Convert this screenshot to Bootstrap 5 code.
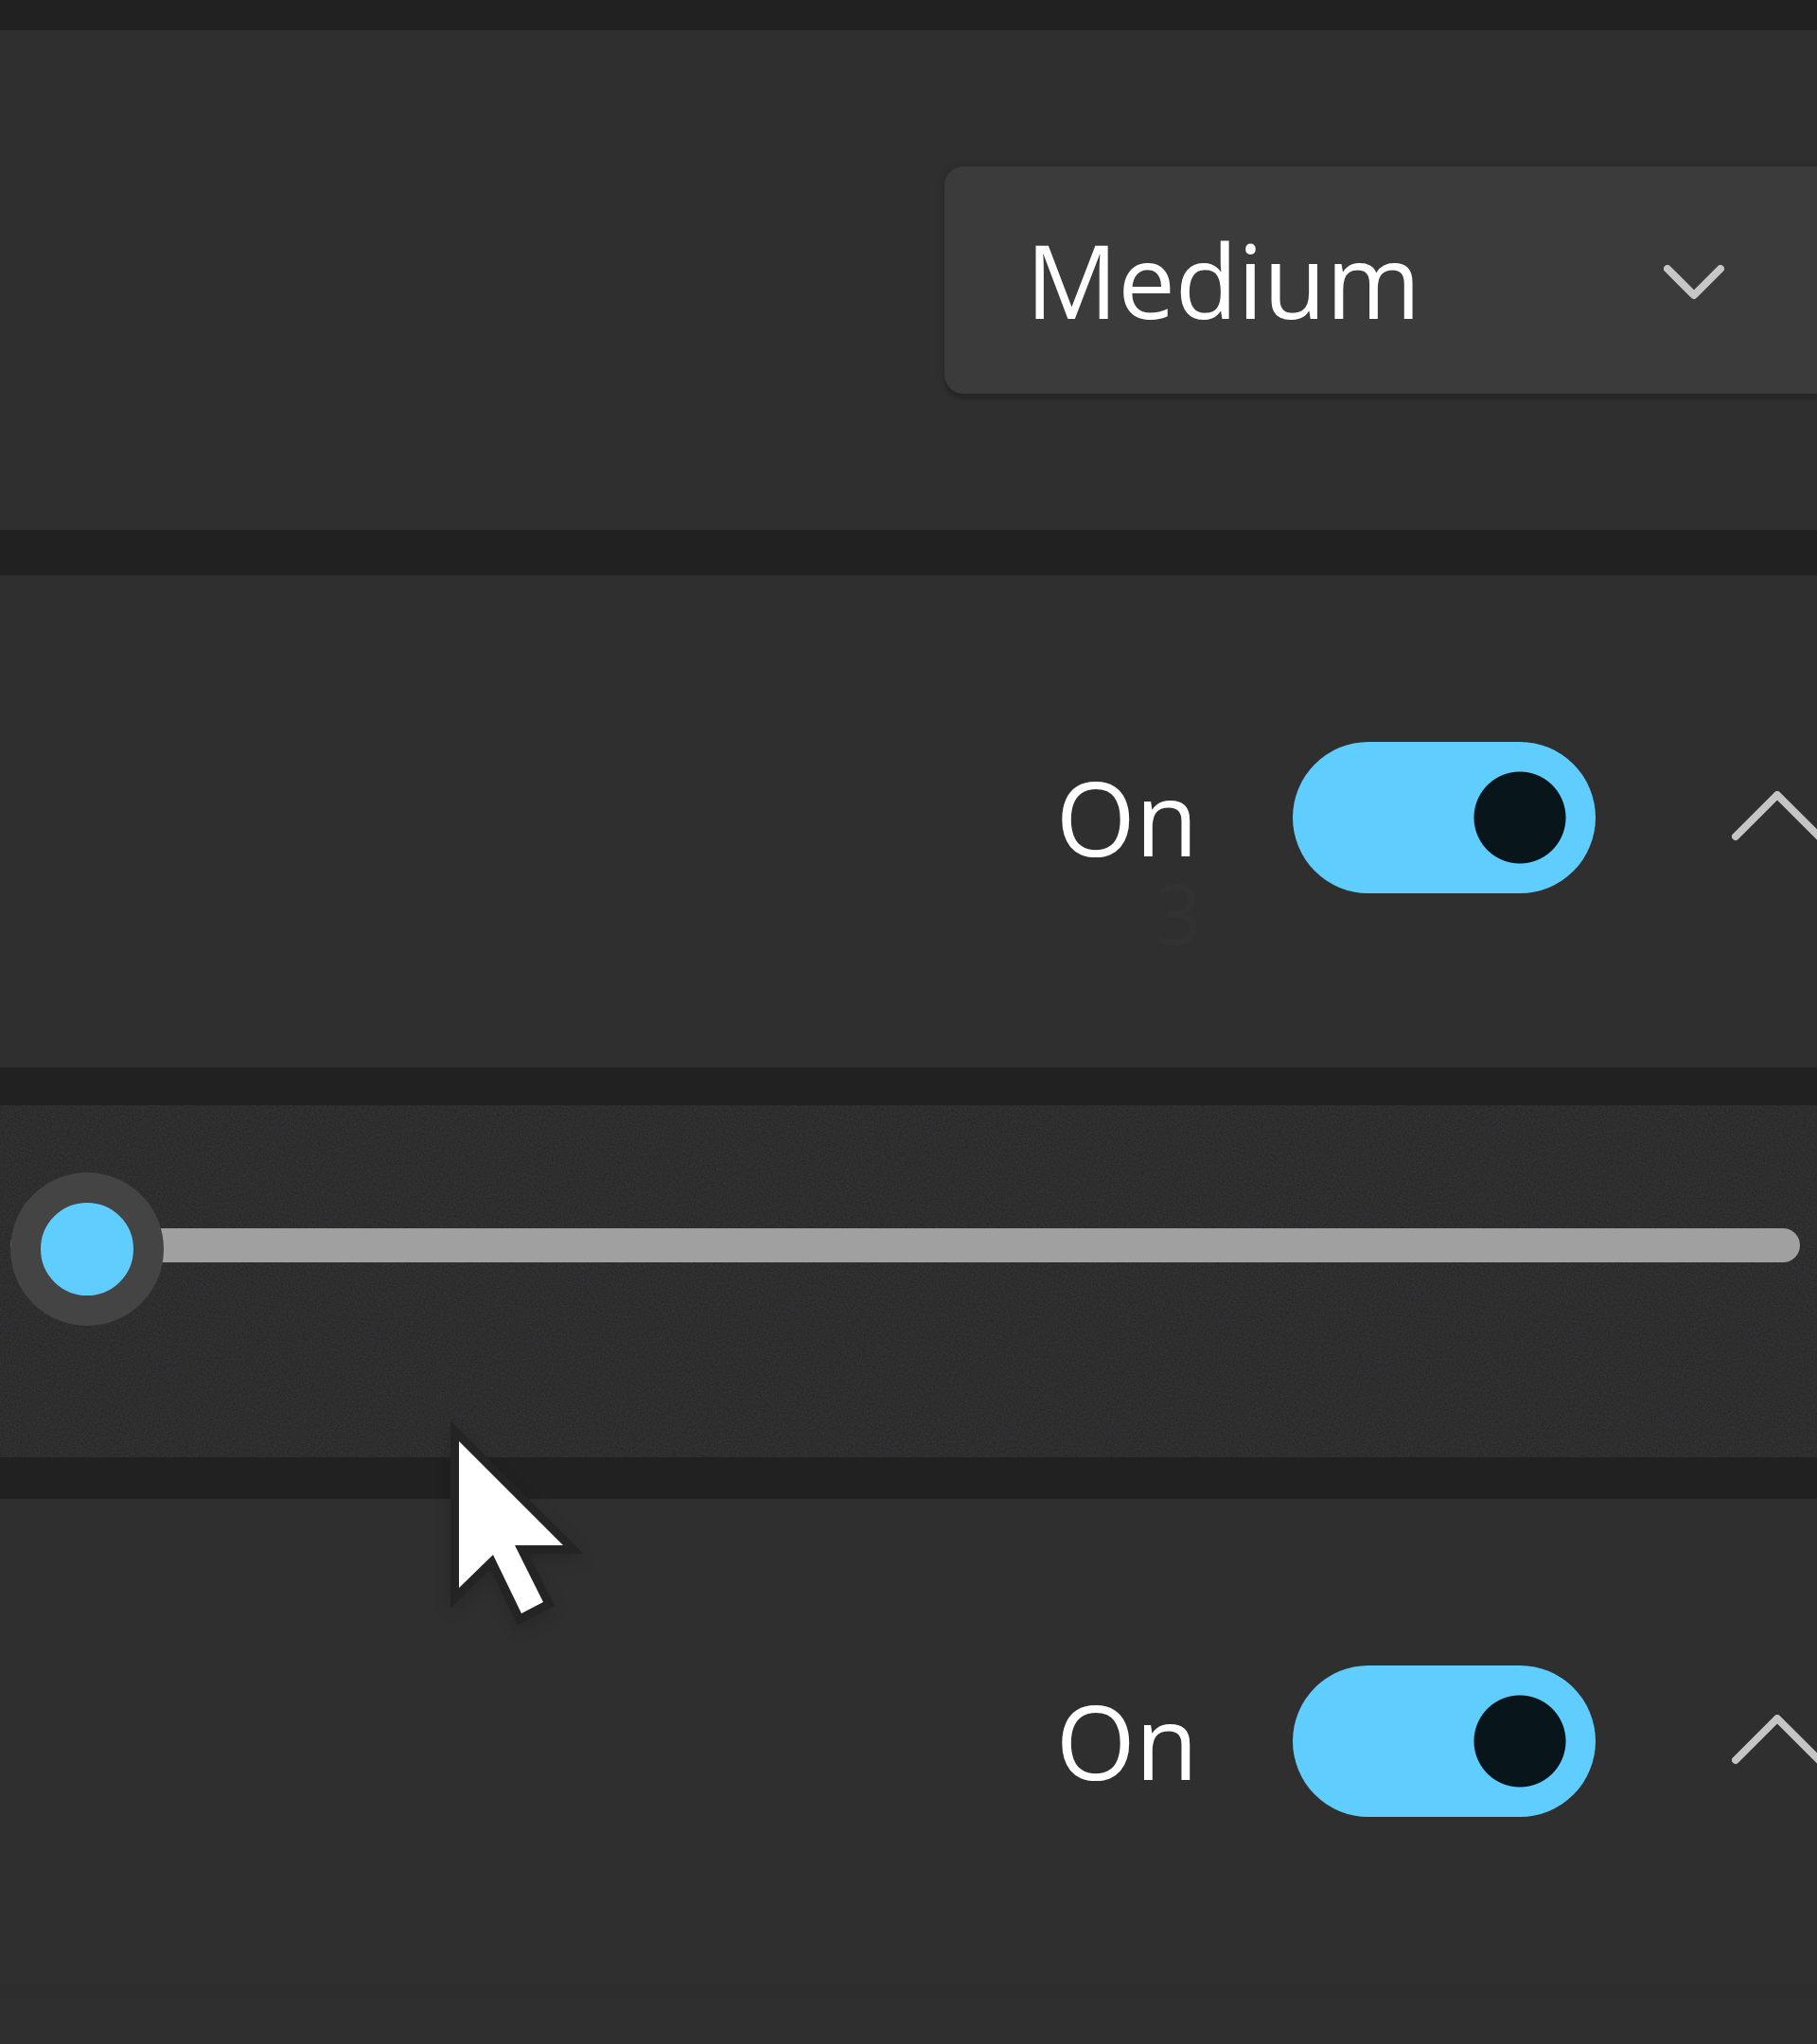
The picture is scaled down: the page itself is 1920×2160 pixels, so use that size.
<!DOCTYPE html>
<html lang="en">
<head>
<meta charset="utf-8">
<meta name="viewport" content="width=device-width, initial-scale=1">
<title>Settings</title>
<link rel="stylesheet" href="https://cdn.jsdelivr.net/npm/bootstrap@5.3.0/dist/css/bootstrap.min.css">
<style>
  body { background: #2f2f2f; color: #fff; font-family: "Open Sans", "Noto Sans", sans-serif; font-size: 108px; line-height: 160px; overflow-x: hidden; }
  .setting-list { background: #212121; padding-top: 32px; }
  .setting { background: #2f2f2f; }
  .setting-choice { padding: 144px 0; margin-bottom: 48px; }
  .setting-toggle { padding: 176px 0; }
  .setting-blur { padding-bottom: 184px; margin-bottom: 40px; }
  .setting-range { background: #222223; padding: 67px 18px 143px 11px; margin-bottom: 44px; }
  .choice-wrap { width: 922px; }
  .choice { height: 240px; padding: 0 180px 0 86px; border: 0; border-radius: 20px 0 0 20px; appearance: none; color: #fff; background: #3b3b3b; font: inherit; box-shadow: 0 6px 3px rgba(0,0,0,.14), 0 0 10px rgba(0,0,0,.12); }
  .choice-arrow { right: 98px; top: 104px; width: 64px; height: 40px; pointer-events: none; }
  .state { margin-right: 100px; }
  .state-count { right: 96px; top: 140px; font-size: 88px; line-height: 80px; color: #323232; }
  .form-check-input.toggle { width: 320px; height: 160px; margin: 0; border: 0; border-radius: 80px; flex: none;
    background: radial-gradient(circle at 240px 80px, #08151b 48px, #60cdff 49px); }
  .expander { width: 234px; height: 160px; padding: 0 0 0 144px; border: 0; background: none; overflow: hidden; flex: none; }
  .slider { display: block; position: relative; width: 100%; height: 162px; margin: 0; padding: 0; appearance: none; background: none; }
  .slider::-webkit-slider-runnable-track { height: 36px; border-radius: 18px; background: #a0a0a0; }
  .slider::-webkit-slider-thumb { appearance: none; width: 162px; height: 162px; margin-top: -59px; border: 32px solid #444; border-radius: 50%; background: #60cdff; }
  .grain { inset: 0; width: 100%; height: 100%; }
  .pointer { left: 460px; top: 1480px; width: 180px; height: 260px; pointer-events: none; filter: drop-shadow(0 6px 8px rgba(0,0,0,.15)); }
  .list-end { border-bottom: 16px solid #2d2d2d; }
</style>
<script src="https://cdn.jsdelivr.net/npm/bootstrap@5.3.0/dist/js/bootstrap.bundle.min.js"></script>
</head>
<body>
<main class="setting-list position-relative overflow-hidden">
  <section class="setting setting-choice d-flex justify-content-end">
    <div class="choice-wrap position-relative">
      <select class="choice w-100 d-block" aria-label="Size"><option>Medium</option></select>
      <svg class="choice-arrow position-absolute" viewBox="0 0 64 40" fill="none" stroke="#c7c7c7" stroke-width="8" stroke-linecap="round" stroke-linejoin="round"><path d="M4 4 32 32 60 4"/></svg>
    </div>
  </section>

  <section class="setting setting-toggle setting-blur d-flex justify-content-end align-items-center">
    <div class="position-relative">
      <label class="state d-block" for="first-toggle">On</label>
      <span class="state-count position-absolute">3</span>
    </div>
    <input class="toggle form-check-input" type="checkbox" role="switch" id="first-toggle" checked>
    <button class="expander" type="button" aria-label="Collapse">
      <svg class="d-block" width="96" height="56" viewBox="0 0 96 56" fill="none" stroke="#c5c5c5" stroke-width="8" stroke-linecap="round" stroke-linejoin="round"><path d="M4 48 48 4 92 48"/></svg>
    </button>
  </section>

  <section class="setting setting-range position-relative">
    <svg class="grain position-absolute" aria-hidden="true">
      <filter id="grain" color-interpolation-filters="sRGB"><feTurbulence type="fractalNoise" baseFrequency="0.6" numOctaves="2" seed="4"/><feColorMatrix type="matrix" values=".7 .2 .1 0 0  .6 .3 .1 0 0  .6 .1 .3 0 0  0 0 0 0 .13"/></filter>
      <rect width="100%" height="100%" filter="url(#grain)"/>
    </svg>
    <input class="slider" type="range" min="0" max="100" value="0" aria-label="Level">
  </section>

  <section class="setting setting-toggle list-end d-flex justify-content-end align-items-center">
    <label class="state" for="second-toggle">On</label>
    <input class="toggle form-check-input" type="checkbox" role="switch" id="second-toggle" checked>
    <button class="expander" type="button" aria-label="Collapse">
      <svg class="d-block" width="96" height="56" viewBox="0 0 96 56" fill="none" stroke="#c5c5c5" stroke-width="8" stroke-linecap="round" stroke-linejoin="round"><path d="M4 48 48 4 92 48"/></svg>
    </button>
  </section>

  <svg class="pointer position-absolute" viewBox="460 1480 180 260" aria-hidden="true">
    <path d="M485 1523 595 1633H544L574 1693 551 1705 521 1643 485 1678Z" fill="#fff" stroke="#242424" stroke-width="18" stroke-linejoin="miter" paint-order="stroke"/>
  </svg>
</main>
</body>
</html>
